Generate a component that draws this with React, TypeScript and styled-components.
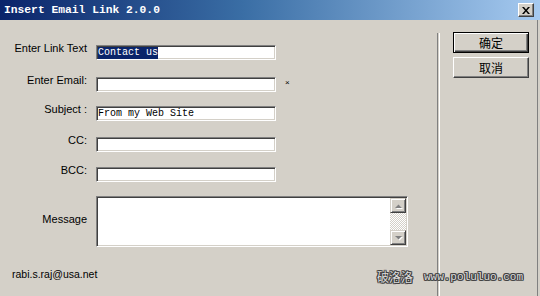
import React from "react";
import styled, { createGlobalStyle } from "styled-components";

const FACE = "#d4d0c8";

const FIELDS = [
  { label: "Enter Link Text", value: "Contact us", selected: true, gap: 0 },
  { label: "Enter Email:", value: "", required: true, gap: 17 },
  { label: "Subject :", value: "From my Web Site", gap: 14 },
  { label: "CC:", value: "", gap: 16 },
  { label: "BCC:", value: "", gap: 15 },
];

export default function App() {
  return (
    <>
      <GlobalStyle />
      <Window>
        <TitleBar>
          <Title>Insert Email Link 2.0.0</Title>
          <CloseButton aria-label="Close">
            <svg width="8" height="7" viewBox="0 0 8 7">
              <path d="M0 0 L2 0 L4 2.5 L6 0 L8 0 L5 3.5 L8 7 L6 7 L4 4.5 L2 7 L0 7 L3 3.5 Z" fill="#000" />
            </svg>
          </CloseButton>
        </TitleBar>
        <Body>
          <FormPane>
            {FIELDS.map((f) => (
              <Row key={f.label} $gap={f.gap}>
                <Label>{f.label}</Label>
                <Field>
                  {f.selected ? <Selection>{f.value}</Selection> : <FieldText>{f.value}</FieldText>}
                </Field>
                {f.required && <Required>×</Required>}
              </Row>
            ))}
            <MessageRow>
              <Label $center>Message</Label>
              <MessageBox>
                <MessageArea />
                <ScrollBar>
                  <ScrollArrow>
                    <svg width="9" height="6" viewBox="0 0 9 6">
                      <path d="M1 5 L8 5 L4.5 1.5 Z" fill="#fff" transform="translate(1 1)" />
                      <path d="M1 5 L8 5 L4.5 1.5 Z" fill="#808080" />
                    </svg>
                  </ScrollArrow>
                  <ScrollTrack />
                  <ScrollArrow>
                    <svg width="9" height="6" viewBox="0 0 9 6">
                      <path d="M1 1 L8 1 L4.5 4.5 Z" fill="#fff" transform="translate(1 1)" />
                      <path d="M1 1 L8 1 L4.5 4.5 Z" fill="#808080" />
                    </svg>
                  </ScrollArrow>
                </ScrollBar>
              </MessageBox>
            </MessageRow>
            <Footer>rabi.s.raj@usa.net</Footer>
          </FormPane>
          <Separator />
          <ButtonPane>
            <DialogButton $isDefault>确定</DialogButton>
            <DialogButton>取消</DialogButton>
          </ButtonPane>
        </Body>
        <Watermark>
          <WatermarkCn>破洛洛</WatermarkCn>
          <WatermarkUrl>www.poluluo.com</WatermarkUrl>
        </Watermark>
      </Window>
    </>
  );
}

const GlobalStyle = createGlobalStyle`
  html, body {
    margin: 0;
    padding: 0;
    background: ${FACE};
  }
  body {
    font-family: "Liberation Sans", Arial, sans-serif;
  }
`;

const Window = styled.div`
  position: relative;
  width: 540px;
  height: 296px;
  display: flex;
  flex-direction: column;
  background: ${FACE};
  overflow: hidden;
`;

const TitleBar = styled.div`
  height: 20px;
  flex: none;
  display: flex;
  align-items: center;
  justify-content: space-between;
  padding: 0 6px 0 4px;
  background: linear-gradient(to right, #0a246a 0%, #3a6ea5 45%, #a6caf0 100%);
`;

const Title = styled.span`
  color: #fff;
  font-family: "Liberation Mono", "Courier New", monospace;
  font-weight: bold;
  font-size: 11.3px;
  line-height: 20px;
  white-space: pre;
`;

const CloseButton = styled.div`
  width: 16px;
  height: 14px;
  box-sizing: border-box;
  display: flex;
  align-items: center;
  justify-content: center;
  background: ${FACE};
  border: 1px solid;
  border-color: #fff #404040 #404040 #fff;
  box-shadow: inset -1px -1px #808080;
`;

const Body = styled.div`
  flex: 1;
  display: flex;
  padding-right: 2px;
`;

const FormPane = styled.div`
  width: 437px;
  flex: none;
  display: flex;
  flex-direction: column;
  padding-top: 25px;
  box-sizing: border-box;
`;

const Row = styled.div<{ $gap: number }>`
  display: grid;
  grid-template-columns: 87px 180px auto;
  column-gap: 9px;
  align-items: start;
  margin-top: ${(p) => p.$gap}px;
`;

const Label = styled.div<{ $center?: boolean }>`
  text-align: right;
  font-size: 11px;
  line-height: 13px;
  color: #000;
  white-space: nowrap;
  margin-top: ${(p) => (p.$center ? "-4px" : "-3px")};
  align-self: ${(p) => (p.$center ? "center" : "start")};
`;

const Field = styled.div`
  height: 15px;
  box-sizing: border-box;
  background: #fff;
  border: 1px solid;
  border-color: #808080 #fff #fff #808080;
  box-shadow: inset 1px 1px #404040, inset -1px -1px ${FACE};
  padding: 1px 0 0 1px;
  display: flex;
  overflow: hidden;
  font-family: "Liberation Mono", "Courier New", monospace;
  font-size: 10px;
  line-height: 11px;
  white-space: pre;
`;

const FieldText = styled.span`
  color: #000;
`;

const Selection = styled.span`
  background: #0a246a;
  color: #fff;
`;

const Required = styled.span`
  font-size: 8px;
  line-height: 8px;
  margin-top: 2px;
  color: #000;
`;

const MessageRow = styled.div`
  display: grid;
  grid-template-columns: 87px 312px;
  column-gap: 9px;
  margin-top: 14px;
`;

const MessageBox = styled.div`
  height: 51px;
  box-sizing: border-box;
  display: flex;
  border: 1px solid;
  border-color: #808080 #fff #fff #808080;
  box-shadow: inset 1px 1px #404040, inset -1px -1px ${FACE};
  padding: 1px;
  background: #fff;
`;

const MessageArea = styled.div`
  flex: 1;
  background: #fff;
`;

const ScrollBar = styled.div`
  width: 16px;
  display: flex;
  flex-direction: column;
`;

const ScrollArrow = styled.div`
  height: 15px;
  flex: none;
  box-sizing: border-box;
  display: flex;
  align-items: center;
  justify-content: center;
  background: ${FACE};
  border: 1px solid;
  border-color: ${FACE} #404040 #404040 ${FACE};
  box-shadow: inset 1px 1px #fff, inset -1px -1px #808080;
`;

const ScrollTrack = styled.div`
  flex: 1;
  background: repeating-conic-gradient(#fff 0 25%, ${FACE} 0 50%) 0 0 / 2px 2px;
`;

const Footer = styled.div`
  margin-top: 21px;
  padding-left: 12px;
  font-size: 10.5px;
  line-height: 13px;
  color: #000;
`;

const Separator = styled.div`
  width: 1px;
  margin-top: 13px;
  border-left: 1px solid #808080;
  border-right: 1px solid #fff;
`;

const ButtonPane = styled.div`
  flex: 1;
  display: flex;
  flex-direction: column;
  gap: 4px;
  padding: 12px 0 0 13px;
  border-right: 1px solid #808080;
`;

const DialogButton = styled.button<{ $isDefault?: boolean }>`
  width: 76px;
  height: 21px;
  padding: 0;
  background: ${FACE};
  font-family: "Noto Sans CJK SC", sans-serif;
  font-size: 12px;
  line-height: 15px;
  color: #000;
  border: 1px solid;
  border-color: ${(p) => (p.$isDefault ? "#000" : "#fff #404040 #404040 #fff")};
  box-shadow: ${(p) =>
    p.$isDefault
      ? "inset 1px 1px #fff, inset -1px -1px #404040, inset -2px -2px #808080"
      : "inset -1px -1px #808080"};
`;

const Watermark = styled.div`
  position: absolute;
  right: 17px;
  bottom: 12px;
  display: flex;
  align-items: center;
  gap: 11px;
  color: #dcdcdc;
  text-shadow: 1px 0 #3c3c3c, -1px 0 #3c3c3c, 0 1px #3c3c3c, 0 -1px #3c3c3c,
    1px 1px #5a5a5a, -1px -1px #5a5a5a, 1px -1px #5a5a5a, -1px 1px #5a5a5a;
  pointer-events: none;
`;

const WatermarkCn = styled.span`
  font-family: "Noto Sans CJK SC", sans-serif;
  font-size: 12px;
  line-height: 14px;
`;

const WatermarkUrl = styled.span`
  font-family: "Liberation Mono", "Courier New", monospace;
  font-size: 11px;
  line-height: 14px;
`;
